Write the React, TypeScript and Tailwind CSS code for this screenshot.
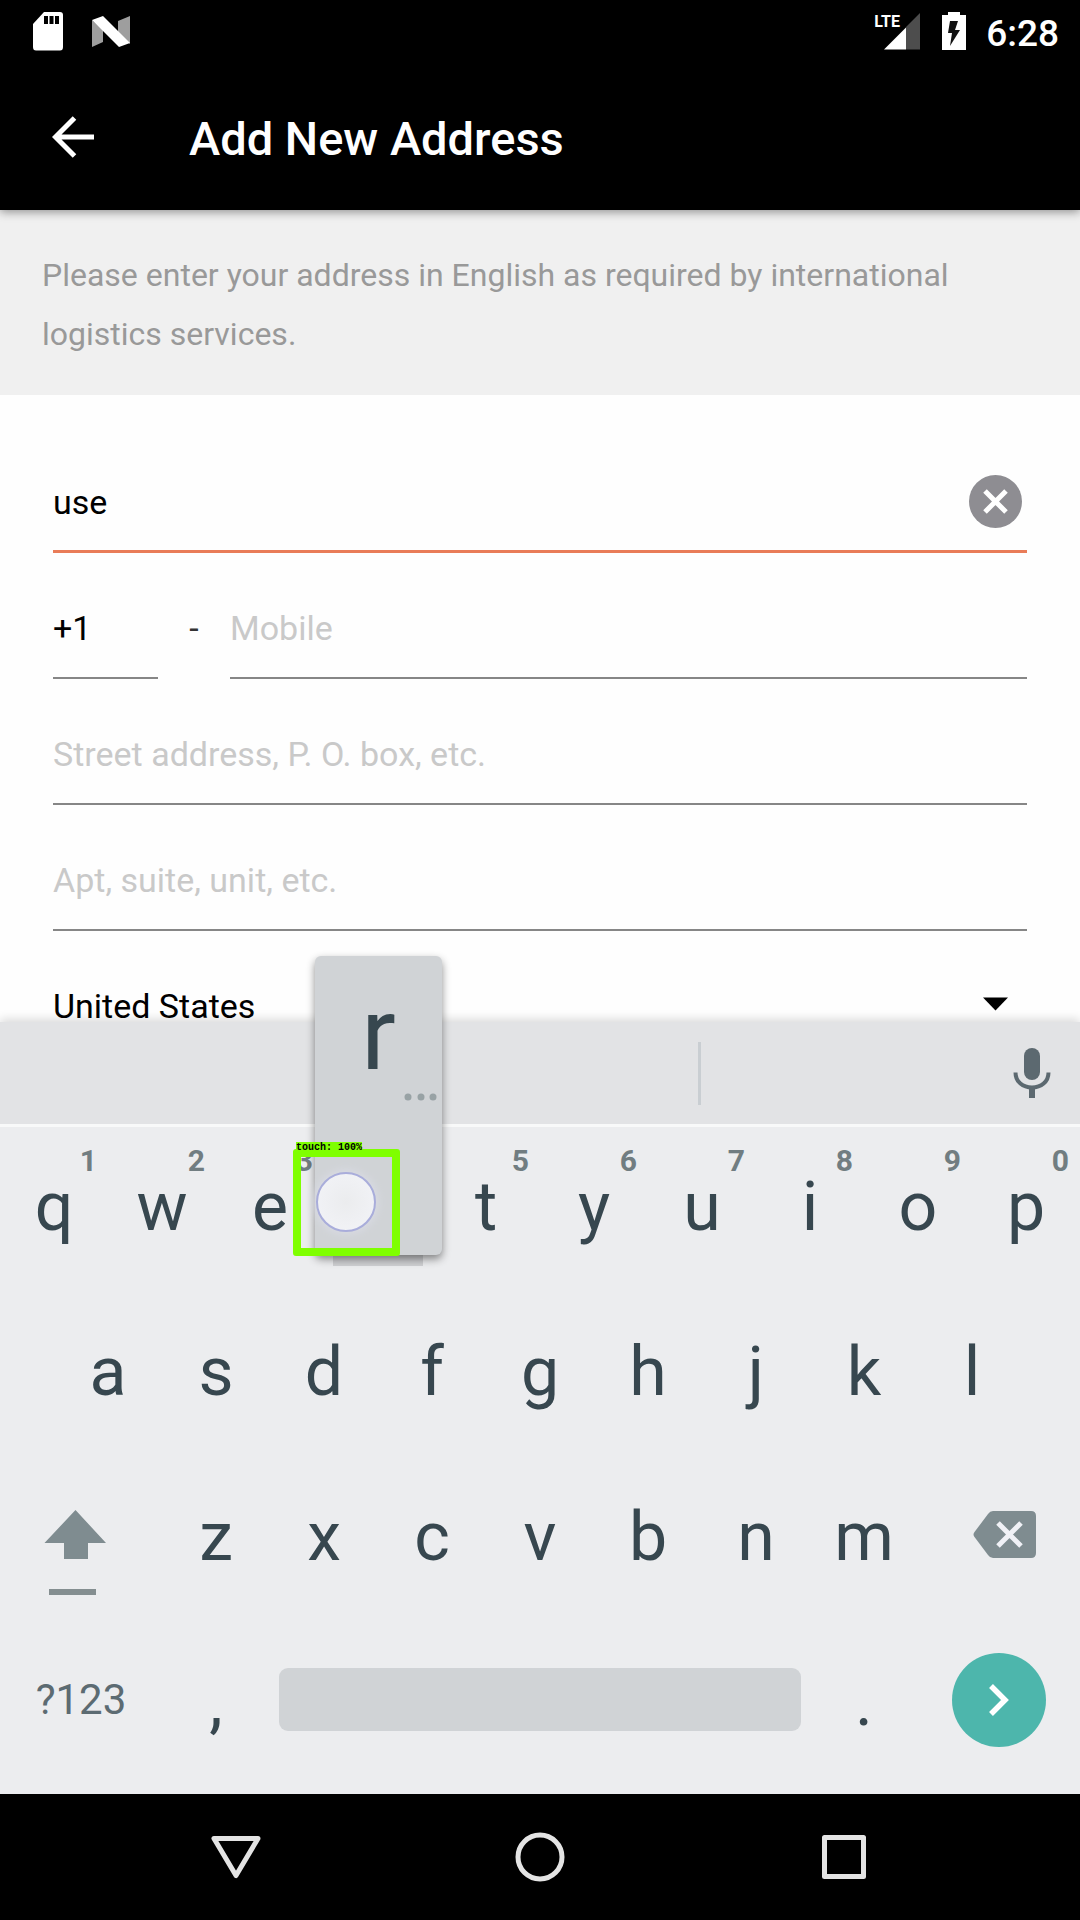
import React from "react";

const TOP_ROW = ["q", "w", "e", "r", "t", "y", "u", "i", "o", "p"];
const HOME_ROW = ["a", "s", "d", "f", "g", "h", "j", "k", "l"];
const BOTTOM_ROW = ["z", "x", "c", "v", "b", "n", "m"];

function StatusBar() {
  return (
    <div className="flex h-[72px] items-start justify-between pt-3 pr-[21px] pl-8 text-white">
      <div className="flex gap-7">
        <svg width="32" height="39" viewBox="0 0 32 39" aria-label="SD card">
          <path d="M12 0H28Q31 0 31 3V35Q31 38.500 28 38.500H4Q1 38.500 1 35V12Z" fill="#fff" />
          <path d="M12 4h4v8h-4zM17.500 4h4v8h-4zM23 4h4v8h-4z" fill="#000" />
        </svg>
        <svg width="38" height="39" viewBox="0 0 38 39" aria-label="Android">
          <path d="M0 8L11 18V30L0 35ZM38 4V32L26 20V9Z" fill="#9e9e9e" />
          <path d="M0 8L11 4L38 31L27 35Z" fill="#fff" />
        </svg>
      </div>
      <div className="flex">
        <div className="relative h-[39px] w-[46px]">
          <svg width="46" height="39" viewBox="0 0 46 39" aria-label="Signal">
            <path d="M46 1V37.500H32V15Z" fill="#4d4d4d" />
            <path d="M10 37.500L32 15.500V37.500Z" fill="#fff" />
          </svg>
          <span className="absolute top-0.5 left-0 text-[16px] leading-4 font-bold">LTE</span>
        </div>
        <svg className="ml-[22px]" width="24" height="39" viewBox="0 0 24 39" aria-label="Battery charging">
          <path d="M6 0H18V3H24V38H0V3H6Z" fill="#fff" />
          <path d="M8 9H16L13 18H18L8 34L10 21H6Z" fill="#111" />
        </svg>
        <span className="ml-5 text-[37px] leading-[44px] font-medium">6:28</span>
      </div>
    </div>
  );
}

function Field({ children, focused = false }: { children: React.ReactNode; focused?: boolean }) {
  return (
    <div
      className={
        focused
          ? "flex h-[126px] items-center border-b-3 border-[#e97c58] pt-[26px]"
          : "flex h-[126px] items-center border-b-2 border-[#868686] pt-[26px]"
      }
    >
      {children}
    </div>
  );
}

const inputClass =
  "w-full min-w-0 bg-transparent text-[34px] leading-[42px] text-black outline-none placeholder:text-[#c9c9c9]";

function TouchMarker() {
  return (
    <div className="absolute top-[25px] -left-[31px] z-20 h-[107px] w-[107px] rounded-[3px] border-8 border-[#7fff00]">
      <span className="absolute -top-[15px] -left-[5px] bg-[#7fff00] font-['Liberation_Mono',monospace] text-[10px] leading-[11px] font-bold whitespace-nowrap text-black">
        touch: 100%
      </span>
      <span className="absolute top-[15px] left-[15px] h-[60px] w-[60px] rounded-full border-2 border-[#a9addb] bg-[radial-gradient(circle,#ebecee,#f3f4f8)] shadow-[0_0_8px_2px_#d9dbe4]" />
    </div>
  );
}

function KeyPopup() {
  return (
    <>
      <div className="absolute top-[130px] left-[9px] h-3 w-[90px] bg-[#cfd0d3]" />
      <div className="absolute -top-[168px] -left-[9px] z-10 h-[299px] w-[127px] rounded-[6px] bg-[#d0d3d6] shadow-[0_4px_8px_rgba(0,0,0,0.45)]">
        <div className="pt-7 text-center text-[102px] leading-[100px]">r</div>
        <svg className="absolute top-[137px] right-1" width="34" height="8" viewBox="0 0 34 8">
          <circle cx="4" cy="4" r="3.500" fill="#98a2a5" />
          <circle cx="17" cy="4" r="3.500" fill="#98a2a5" />
          <circle cx="29" cy="4" r="3.500" fill="#98a2a5" />
        </svg>
      </div>
    </>
  );
}

function Key({ label, hint, pressed = false }: { label: string; hint?: string; pressed?: boolean }) {
  return (
    <div className="relative col-span-2">
      <button type="button" className="h-full w-full text-center text-[68px] leading-[80px]">
        {pressed ? "" : label}
        {hint && (
          <span className="absolute top-[19px] right-[11px] text-[30px] leading-9 font-bold text-[#717d81]">
            {hint}
          </span>
        )}
      </button>
      {pressed && <KeyPopup />}
      {pressed && <TouchMarker />}
    </div>
  );
}

function Keyboard() {
  return (
    <section aria-label="Keyboard" className="relative z-10 bg-[#ecedef] text-[#37474f] shadow-[0_-3px_9px_rgba(0,0,0,0.14)]">
      <div className="grid h-[102px] grid-cols-[1fr_3px_1fr] items-center bg-[#e2e3e5] pl-[318px]">
        <div />
        <div className="h-[63px] bg-[#c9ced2]" />
        <button type="button" aria-label="Voice input" className="justify-self-end pr-[29px]">
          <svg width="38" height="51" viewBox="0 0 38 51">
            <rect x="11" y="0" width="16" height="32" rx="8" fill="#5c6970" />
            <path d="M2.500 24.500C2.500 34 10 39.500 19 39.500S35.500 34 35.500 24.500" fill="none" stroke="#5c6970" strokeWidth="4" />
            <path d="M16 39h6v11h-6z" fill="#5c6970" />
          </svg>
        </button>
      </div>
      <div className="pb-2.5 shadow-[inset_0_3px_0_#f8f9f9]">
        <div className="grid h-[165px] grid-cols-20">
          {TOP_ROW.map((k, i) => (
            <Key key={k} label={k} hint={k === "r" ? undefined : String((i + 1) % 10)} pressed={k === "r"} />
          ))}
        </div>
        <div className="grid h-[165px] grid-cols-20">
          <div />
          {HOME_ROW.map((k) => (
            <Key key={k} label={k} />
          ))}
          <div />
        </div>
        <div className="grid h-[165px] grid-cols-20">
          <button type="button" aria-label="Shift" className="col-span-3 flex items-start pt-14 pl-11">
            <svg width="62" height="85" viewBox="0 0 62 85">
              <path d="M31.500 0L62 33H44V49H20V33H0.500Z" fill="#7f8c90" />
              <path d="M5 79h47v6H5z" fill="#848e90" />
            </svg>
          </button>
          {BOTTOM_ROW.map((k) => (
            <Key key={k} label={k} />
          ))}
          <button type="button" aria-label="Delete" className="col-span-3 flex items-start justify-end pt-14 pr-11">
            <svg width="63" height="49" viewBox="0 0 63 49">
              <path d="M20 1H58Q63 1 63 6V43Q63 48 58 48H20Q17 48 15 45L1.500 27Q-0.500 24.500 1.500 22L15 4Q17 1 20 1Z" fill="#7f8c90" />
              <path d="M25 13L48 36M48 13L25 36" stroke="#f0f1f6" strokeWidth="5" />
            </svg>
          </button>
        </div>
        <div className="grid h-[165px] grid-cols-20">
          <button type="button" className="col-span-3 pb-1 text-center text-[42px] leading-[50px] text-[#5c6b72]">
            ?123
          </button>
          <Key label="," />
          <div className="col-span-10 flex items-center px-[9px] pb-1">
            <button type="button" aria-label="Space" className="h-[63px] w-full rounded-[9px] bg-[#d0d3d6]" />
          </div>
          <Key label="." />
          <div className="col-span-3 flex items-center justify-center pb-1">
            <button type="button" aria-label="Next" className="flex h-[94px] w-[94px] items-center justify-center rounded-full bg-[#4db6ac]">
              <svg width="22" height="32" viewBox="0 0 22 32">
                <path d="M3 2L17 16L3 30" fill="none" stroke="#fff" strokeWidth="5.500" />
              </svg>
            </button>
          </div>
        </div>
      </div>
    </section>
  );
}

function NavBar() {
  return (
    <nav className="relative z-10 grid h-[126px] grid-cols-3 items-center bg-black px-[84px]">
      <button type="button" aria-label="Back" className="flex justify-center">
        <svg width="50" height="50" viewBox="0 0 50 50" fill="none" stroke="#e4e4e4" strokeWidth="5" strokeLinejoin="round">
          <path d="M3 6.500H47L25 43.500Z" />
        </svg>
      </button>
      <button type="button" aria-label="Home" className="flex justify-center">
        <svg width="50" height="50" viewBox="0 0 50 50" fill="none" stroke="#e4e4e4" strokeWidth="5">
          <circle cx="25" cy="25" r="22" />
        </svg>
      </button>
      <button type="button" aria-label="Overview" className="flex justify-center">
        <svg width="50" height="50" viewBox="0 0 50 50" fill="none" stroke="#e4e4e4" strokeWidth="5" strokeLinejoin="round">
          <rect x="5.500" y="5.500" width="39" height="39" />
        </svg>
      </button>
    </nav>
  );
}

export default function App() {
  return (
    <div className="flex h-screen flex-col overflow-hidden bg-[#fefefe] font-[Roboto,sans-serif]">
      <header className="relative z-10 h-[210px] shrink-0 bg-black text-white shadow-[0_2px_9px_rgba(0,0,0,0.4)]">
        <StatusBar />
        <div className="flex h-[134px] items-center pl-[52px]">
          <button type="button" aria-label="Back" className="pb-1">
            <svg width="42" height="42" viewBox="0 0 42 42" fill="none" stroke="#fff" strokeWidth="5">
              <path d="M42 21H4M22.500 2L3.500 21L22.500 40" />
            </svg>
          </button>
          <h1 className="pl-[95px] text-[47px] leading-14 font-medium">Add New Address</h1>
        </div>
      </header>
      <main className="min-h-0 flex-1 overflow-hidden">
        <p className="bg-[#f0f0f0] px-[42px] pt-9 pb-[31px] text-[32px] leading-[59px] text-[#999]">
          Please enter your address in English as required by international logistics services.
        </p>
        <form className="px-[53px] pt-8">
          <Field focused>
            <input aria-label="Name" className={inputClass} defaultValue="use" />
            <button type="button" aria-label="Clear" className="mr-[5px] shrink-0">
              <svg width="53" height="53" viewBox="0 0 53 53">
                <circle cx="26.500" cy="26.500" r="26.500" fill="#8e8d92" />
                <path d="M16 16L37 37M37 16L16 37" stroke="#fff" strokeWidth="5" />
              </svg>
            </button>
          </Field>
          <div className="flex">
            <div className="w-[105px]">
              <Field>
                <input aria-label="Country code" className={inputClass} defaultValue="+1" />
              </Field>
            </div>
            <div className="flex w-[72px] items-center justify-center pt-6 text-[34px] leading-[42px] text-[#333]">-</div>
            <div className="flex-1">
              <Field>
                <input aria-label="Mobile" className={inputClass} placeholder="Mobile" />
              </Field>
            </div>
          </div>
          <Field>
            <input aria-label="Street address" className={inputClass} placeholder="Street address, P. O. box, etc." />
          </Field>
          <Field>
            <input aria-label="Apartment" className={inputClass} placeholder="Apt, suite, unit, etc." />
          </Field>
          <Field>
            <select aria-label="Country" className="w-full appearance-none bg-transparent text-[34px] leading-[42px] text-black outline-none">
              <option>United States</option>
            </select>
            <svg className="mr-[19px] mb-1 shrink-0" width="25" height="14" viewBox="0 0 25 14">
              <path d="M0 0.500H25L12.500 13.500Z" fill="#000" />
            </svg>
          </Field>
        </form>
      </main>
      <Keyboard />
      <NavBar />
    </div>
  );
}
